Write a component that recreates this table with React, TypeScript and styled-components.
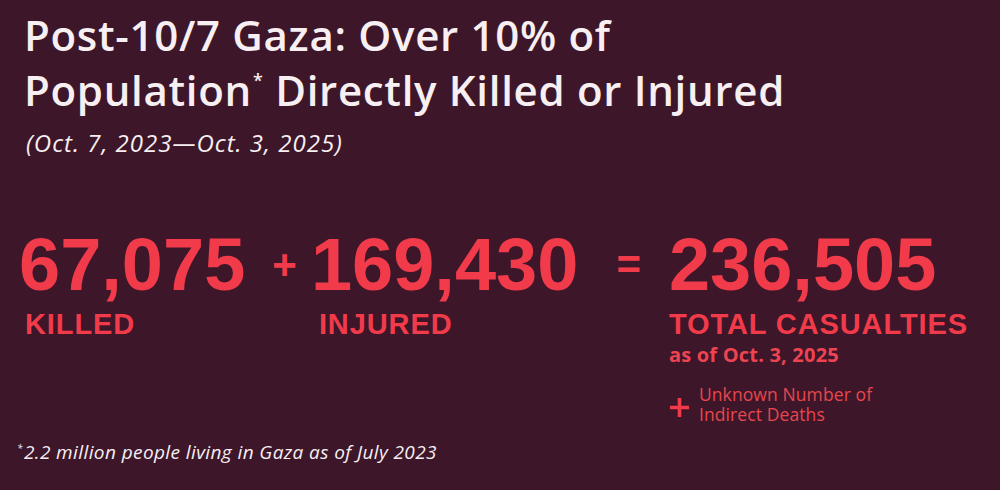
import React from "react";
import styled, { createGlobalStyle } from "styled-components";

const Global = createGlobalStyle`
  html, body { margin: 0; padding: 0; background: #3d1629; }
  body { width: 1000px; height: 490px; overflow: hidden; }
`;

const Page = styled.div`
  width: 1000px;
  height: 490px;
  box-sizing: border-box;
  background: #3d1629;
  padding: 7px 0 0 24px;
  display: flex;
  flex-direction: column;
`;

const Title = styled.h1`
  margin: 0;
  font-family: "Open Sans", sans-serif;
  font-weight: 600;
  font-size: 42px;
  line-height: 55px;
  color: #f7eff2;
  letter-spacing: 0.7px;
`;

const Star = styled.sup`
  font-size: 18px;
  line-height: 0;
  vertical-align: 0;
  position: relative;
  top: -19px;
  margin-left: 1px;
`;

const Subtitle = styled.p`
  margin: 11px 0 0 2px;
  font-family: "Open Sans", sans-serif;
  font-style: italic;
  font-size: 24px;
  line-height: 30px;
  letter-spacing: 1px;
  color: #f7eff2;
`;

const Row = styled.div`
  display: flex;
  align-items: flex-start;
  margin: 70px 0 0 -5px;
`;

const Stat = styled.div`
  display: flex;
  flex-direction: column;
`;

const Number = styled.div`
  font-family: "Liberation Sans", Arial, sans-serif;
  font-weight: 700;
  font-size: 74px;
  line-height: 74px;
  color: #f23b4a;
`;

const Label = styled.div<{ $indent: number }>`
  margin-top: 8px;
  padding-left: ${(p) => p.$indent}px;
  font-family: "Liberation Sans", Arial, sans-serif;
  font-weight: 700;
  font-size: 29px;
  line-height: 29px;
  color: #f23b4a;
  letter-spacing: 0.9px;
`;

const AsOf = styled.div`
  margin-top: 5px;
  font-family: "Open Sans", sans-serif;
  font-weight: 700;
  font-size: 20px;
  line-height: 22px;
  letter-spacing: 0.2px;
  color: #ee4451;
`;

const Operator = styled.div<{ $left: number; $right: number }>`
  margin: 0 ${(p) => p.$right}px 0 ${(p) => p.$left}px;
  font-family: "Liberation Sans", Arial, sans-serif;
  font-weight: 700;
  font-size: 42px;
  line-height: 74px;
  color: #f23b4a;
`;

const Indirect = styled.div`
  margin-top: 18px;
  display: flex;
  align-items: center;
  gap: 9px;
`;

const PlusIcon = styled.svg`
  width: 21px;
  height: 21px;
  flex: none;
  margin-top: 6px;
`;

const IndirectText = styled.div`
  display: flex;
  flex-direction: column;
  font-family: "Open Sans", sans-serif;
  font-size: 17.5px;
  line-height: 20px;
  letter-spacing: 0.1px;
  color: #e8464f;
`;

const Footnote = styled.p`
  margin: 17px 0 0 -7px;
  font-family: "Open Sans", sans-serif;
  font-style: italic;
  font-size: 19px;
  line-height: 22px;
  letter-spacing: 0.4px;
  color: #f7eff2;
`;

const FootStar = styled.span`
  font-size: 10px;
  position: relative;
  top: -7px;
  margin-right: 1px;
`;

export default function App() {
  return (
    <>
      <Global />
      <Page>
        <Title>
          Post-10/7 Gaza: Over 10% of
          <br />
          Population<Star>*</Star> Directly Killed or Injured
        </Title>
        <Subtitle>(Oct. 7, 2023—Oct. 3, 2025)</Subtitle>
        <Row>
          <Stat>
            <Number>67,075</Number>
            <Label $indent={6}>KILLED</Label>
          </Stat>
          <Operator $left={27} $right={14}>+</Operator>
          <Stat>
            <Number>169,430</Number>
            <Label $indent={8}>INJURED</Label>
          </Stat>
          <Operator $left={38} $right={28}>=</Operator>
          <Stat>
            <Number>236,505</Number>
            <Label $indent={0}>TOTAL CASUALTIES</Label>
            <AsOf>as of Oct. 3, 2025</AsOf>
            <Indirect>
              <PlusIcon viewBox="0 0 21 21">
                <path d="M10.5 1v19M1 10.5h19" stroke="#f23b4a" strokeWidth="3.6" />
              </PlusIcon>
              <IndirectText>
                <span>Unknown Number of</span>
                <span>Indirect Deaths</span>
              </IndirectText>
            </Indirect>
          </Stat>
        </Row>
        <Footnote>
          <FootStar>*</FootStar>2.2 million people living in Gaza as of July 2023
        </Footnote>
      </Page>
    </>
  );
}
